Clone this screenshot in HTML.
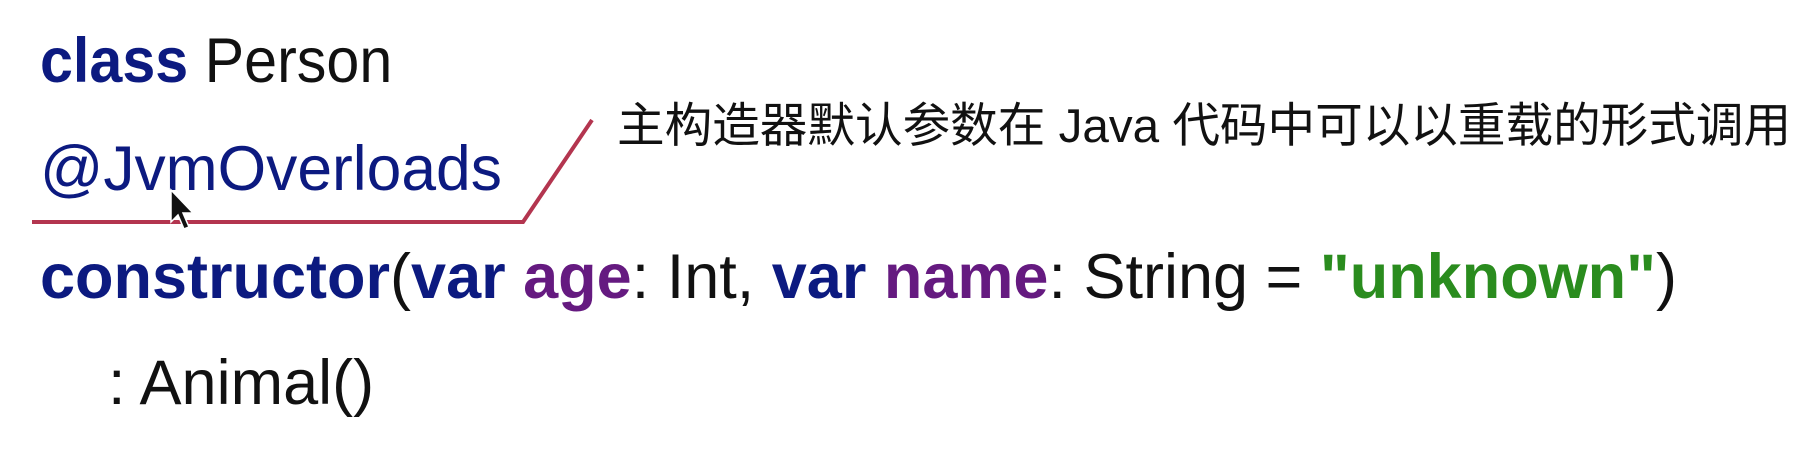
<!DOCTYPE html>
<html><head><meta charset="utf-8"><style>
html,body{margin:0;padding:0;background:#fff;width:1814px;height:454px;overflow:hidden;position:relative}
.l{position:absolute;font-family:"Liberation Sans","Noto Sans CJK SC",sans-serif;font-size:63px;line-height:63px;white-space:nowrap;color:#111;transform-origin:0 0}
.k{color:#0c1a80;font-weight:bold}
.p{color:#651a80;font-weight:bold}
.s{color:#2a8c1e;font-weight:bold}
.a{color:#0c1a80}
.cn{position:absolute;left:617px;top:103px;font-family:"Liberation Sans","Noto Sans CJK SC",sans-serif;font-size:47.6px;line-height:47px;white-space:nowrap;color:#111}
</style></head><body>
<div class="l" style="left:40px;top:30px;transform:scaleX(0.94)"><span class="k">class</span> Person</div>
<div class="l a" style="left:40px;top:138px;transform:scaleX(0.99)">@JvmOverloads</div>
<div class="l" style="left:40px;top:246px"><span class="k">constructor</span>(<span class="k">var</span> <span class="p">age</span>: Int, <span class="k">var</span> <span class="p">name</span>: String = <span class="s">"unknown"</span>)</div>
<div class="l" style="left:108px;top:352px">: Animal()</div>
<div class="cn">主构造器默认参数在 Java 代码中可以以重载的形式调用</div>
<svg style="position:absolute;left:0;top:0" width="1814" height="454">
<polyline points="32,222 523,222 592,120" fill="none" stroke="#b3354f" stroke-width="4"/>
<path d="M171,190 L171,222 L178,215 L184,229 L189,227 L183,213 L193,213 Z" fill="#111" stroke="#fff" stroke-width="1.5"/>
</svg>
</body></html>
